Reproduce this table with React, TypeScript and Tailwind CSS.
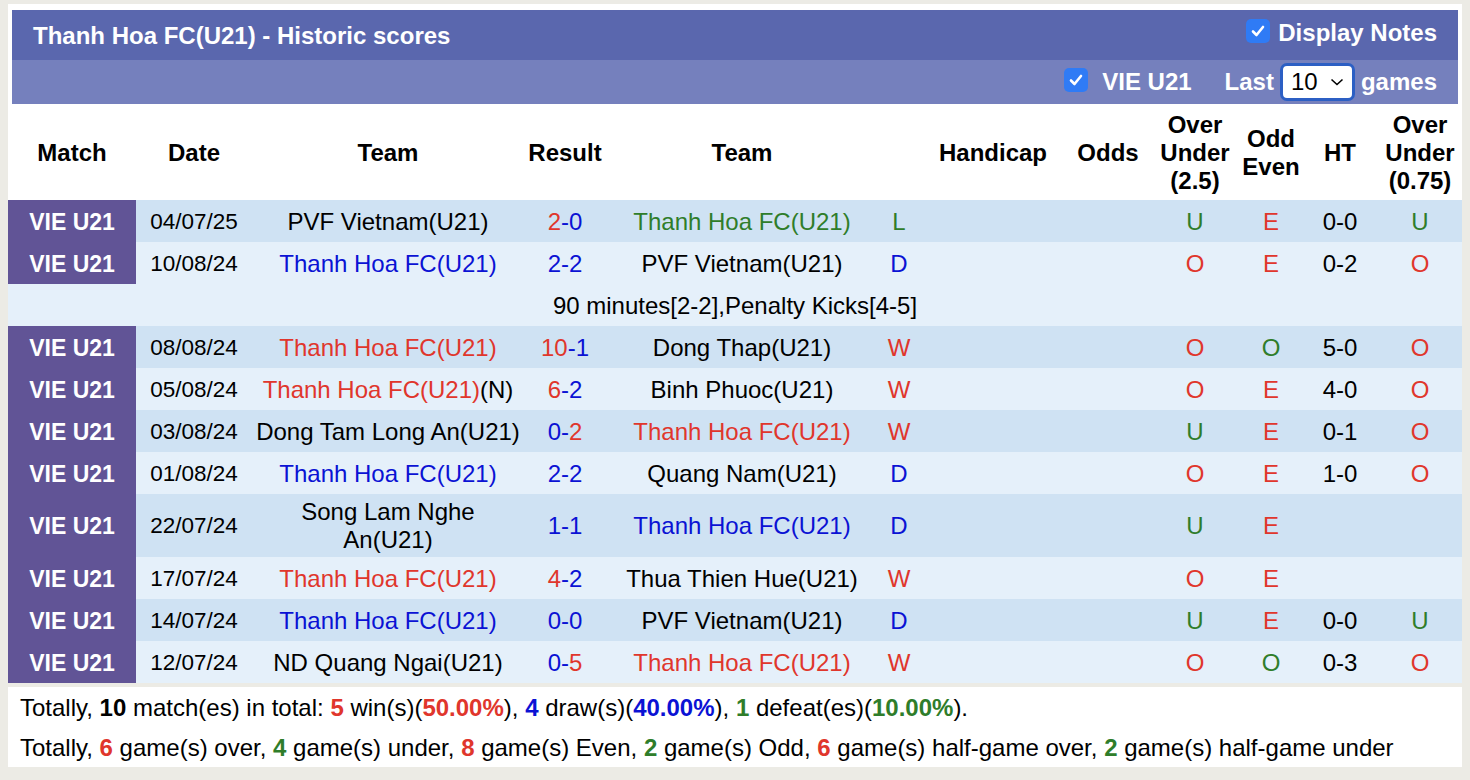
import React from "react";

const RED = "text-[#e0362c]";
const BLUE = "text-[#0b12d4]";
const GREEN = "text-[#2f7d2a]";

type Seg = { t: string; c?: string };
type Row = {
  date: string;
  home: Seg[];
  score: Seg[];
  away: Seg[];
  wl: Seg;
  ou: Seg;
  oe: Seg;
  ht: string;
  ou2: Seg | null;
  note?: string;
  tall?: boolean;
};

const U: Seg = { t: "U", c: GREEN };
const O: Seg = { t: "O", c: RED };
const E: Seg = { t: "E", c: RED };
const OG: Seg = { t: "O", c: GREEN };
const W: Seg = { t: "W", c: RED };
const D: Seg = { t: "D", c: BLUE };
const L: Seg = { t: "L", c: GREEN };

const rows: Row[] = [
  {
    date: "04/07/25",
    home: [{ t: "PVF Vietnam(U21)" }],
    score: [{ t: "2", c: RED }, { t: "-0", c: BLUE }],
    away: [{ t: "Thanh Hoa FC(U21)", c: GREEN }],
    wl: L, ou: U, oe: E, ht: "0-0", ou2: U,
  },
  {
    date: "10/08/24",
    home: [{ t: "Thanh Hoa FC(U21)", c: BLUE }],
    score: [{ t: "2-2", c: BLUE }],
    away: [{ t: "PVF Vietnam(U21)" }],
    wl: D, ou: O, oe: E, ht: "0-2", ou2: O,
    note: "90 minutes[2-2],Penalty Kicks[4-5]",
  },
  {
    date: "08/08/24",
    home: [{ t: "Thanh Hoa FC(U21)", c: RED }],
    score: [{ t: "10", c: RED }, { t: "-1", c: BLUE }],
    away: [{ t: "Dong Thap(U21)" }],
    wl: W, ou: O, oe: OG, ht: "5-0", ou2: O,
  },
  {
    date: "05/08/24",
    home: [{ t: "Thanh Hoa FC(U21)", c: RED }, { t: "(N)" }],
    score: [{ t: "6", c: RED }, { t: "-2", c: BLUE }],
    away: [{ t: "Binh Phuoc(U21)" }],
    wl: W, ou: O, oe: E, ht: "4-0", ou2: O,
  },
  {
    date: "03/08/24",
    home: [{ t: "Dong Tam Long An(U21)" }],
    score: [{ t: "0-", c: BLUE }, { t: "2", c: RED }],
    away: [{ t: "Thanh Hoa FC(U21)", c: RED }],
    wl: W, ou: U, oe: E, ht: "0-1", ou2: O,
  },
  {
    date: "01/08/24",
    home: [{ t: "Thanh Hoa FC(U21)", c: BLUE }],
    score: [{ t: "2-2", c: BLUE }],
    away: [{ t: "Quang Nam(U21)" }],
    wl: D, ou: O, oe: E, ht: "1-0", ou2: O,
  },
  {
    date: "22/07/24",
    home: [{ t: "Song Lam Nghe An(U21)" }],
    score: [{ t: "1-1", c: BLUE }],
    away: [{ t: "Thanh Hoa FC(U21)", c: BLUE }],
    wl: D, ou: U, oe: E, ht: "", ou2: null, tall: true,
  },
  {
    date: "17/07/24",
    home: [{ t: "Thanh Hoa FC(U21)", c: RED }],
    score: [{ t: "4", c: RED }, { t: "-2", c: BLUE }],
    away: [{ t: "Thua Thien Hue(U21)" }],
    wl: W, ou: O, oe: E, ht: "", ou2: null,
  },
  {
    date: "14/07/24",
    home: [{ t: "Thanh Hoa FC(U21)", c: BLUE }],
    score: [{ t: "0-0", c: BLUE }],
    away: [{ t: "PVF Vietnam(U21)" }],
    wl: D, ou: U, oe: E, ht: "0-0", ou2: U,
  },
  {
    date: "12/07/24",
    home: [{ t: "ND Quang Ngai(U21)" }],
    score: [{ t: "0-", c: BLUE }, { t: "5", c: RED }],
    away: [{ t: "Thanh Hoa FC(U21)", c: RED }],
    wl: W, ou: O, oe: OG, ht: "0-3", ou2: O,
  },
];

function Segs({ s }: { s: Seg[] }) {
  return (
    <>
      {s.map((x, i) => (
        <span key={i} className={x.c ?? "text-black"}>
          {x.t}
        </span>
      ))}
    </>
  );
}

function CheckBox() {
  return (
    <span className="inline-flex h-[24px] w-[24px] items-center justify-center rounded-[5px] bg-[#2f7bf5]">
      <svg width="16" height="16" viewBox="0 0 16 16">
        <path d="M3 8.5 L6.5 12 L13 4" fill="none" stroke="white" strokeWidth="2.6" strokeLinecap="round" strokeLinejoin="round" />
      </svg>
    </span>
  );
}

export default function App() {
  const font = { fontFamily: '"Liberation Sans", Arial, Helvetica, sans-serif' };
  return (
    <div className="h-[780px] w-full overflow-hidden bg-[#ecebe5] pt-[4px]" style={font}>
      <div className="ml-[8px] w-[1454px] bg-white pt-[6px]">
        {/* Title bar */}
        <div className="mx-[4px] flex h-[50px] items-center justify-between bg-[#5a67ae] pl-[21px] pr-[21px] text-[24px] font-bold text-white">
          <span className="pt-[1px]">Thanh Hoa FC(U21) - Historic scores</span>
          <span className="flex items-center gap-[8px] pb-[4px]">
            <span className="-mt-[4px]"><CheckBox /></span>
            <span>Display Notes</span>
          </span>
        </div>
        {/* Sub bar */}
        <div className="mx-[4px] flex h-[44px] items-center justify-end bg-[#7580bd] pr-[21px] text-[24px] font-bold text-white">
          <span className="-mt-[4px]"><CheckBox /></span>
          <span className="ml-[14px]">VIE U21</span>
          <span className="ml-[33px]">Last</span>
          <span className="ml-[6px] flex h-[38px] w-[75px] items-center justify-between rounded-[7px] border-[3px] border-[#2c5fc4] bg-white pl-[8px] pr-[8px] text-[24px] font-normal text-black">
            <span>10</span>
            <svg width="14" height="10" viewBox="0 0 14 10">
              <path d="M1.5 2.5 L7 7.5 L12.5 2.5" fill="none" stroke="black" strokeWidth="1.6" />
            </svg>
          </span>
          <span className="ml-[6px]">games</span>
        </div>

        {/* Table */}
        <table className="mt-[1px] w-[1454px] table-fixed border-collapse text-[24px] leading-[28px]">
          <colgroup>
            <col className="w-[128px]" />
            <col className="w-[116px]" />
            <col className="w-[272px]" />
            <col className="w-[82px]" />
            <col className="w-[272px]" />
            <col className="w-[42px]" />
            <col className="w-[146px]" />
            <col className="w-[84px]" />
            <col className="w-[90px]" />
            <col className="w-[62px]" />
            <col className="w-[76px]" />
            <col className="w-[84px]" />
          </colgroup>
          <thead>
            <tr className="h-[95px] text-center font-bold text-black">
              <th className="font-bold">Match</th>
              <th className="font-bold">Date</th>
              <th className="font-bold">Team</th>
              <th className="font-bold">Result</th>
              <th className="font-bold">Team</th>
              <th></th>
              <th className="font-bold">Handicap</th>
              <th className="font-bold">Odds</th>
              <th className="font-bold">Over<br />Under<br />(2.5)</th>
              <th className="font-bold">Odd<br />Even</th>
              <th className="font-bold">HT</th>
              <th className="font-bold">Over<br />Under<br />(0.75)</th>
            </tr>
          </thead>
          <tbody>
            {rows.map((r, i) => {
              const bg = i % 2 === 0 ? "bg-[#cfe2f3]" : "bg-[#e5f0fa]";
              return (
                <React.Fragment key={i}>
                  <tr className={`${bg} ${r.tall ? "h-[63px]" : "h-[42px]"} text-center text-black`}>
                    <td className="bg-[#615496] pt-[1px] text-[23px] font-bold text-white">VIE U21</td>
                    <td className="pt-[1px] text-[22.5px]">{r.date}</td>
                    <td className="px-[4px] pt-[1px]"><Segs s={r.home} /></td>
                    <td className="pt-[1px]"><Segs s={r.score} /></td>
                    <td className="px-[4px] pt-[1px]"><Segs s={r.away} /></td>
                    <td className="pt-[1px]"><Segs s={[r.wl]} /></td>
                    <td></td>
                    <td></td>
                    <td className="pt-[1px]"><Segs s={[r.ou]} /></td>
                    <td className="pt-[1px]"><Segs s={[r.oe]} /></td>
                    <td className="pt-[1px]">{r.ht}</td>
                    <td className="pt-[1px]">{r.ou2 ? <Segs s={[r.ou2]} /> : null}</td>
                  </tr>
                  {r.note ? (
                    <tr className="h-[42px] bg-[#e5f0fa] text-center text-black">
                      <td colSpan={12} className="pt-[1px]">{r.note}</td>
                    </tr>
                  ) : null}
                </React.Fragment>
              );
            })}
          </tbody>
        </table>
      </div>
      {/* Footer */}
      <div className="ml-[8px] mt-[4px] flex h-[80px] w-[1454px] flex-col justify-center gap-[12px] bg-white pl-[12px] pt-[2px] text-[24px] leading-[28px] text-black">
        <div>
          Totally, <b>10</b> match(es) in total: <b className={RED}>5</b> win(s)(<b className={RED}>50.00%</b>), <b className={BLUE}>4</b> draw(s)(<b className={BLUE}>40.00%</b>), <b className={GREEN}>1</b> defeat(es)(<b className={GREEN}>10.00%</b>).
        </div>
        <div>
          Totally, <b className={RED}>6</b> game(s) over, <b className={GREEN}>4</b> game(s) under, <b className={RED}>8</b> game(s) Even, <b className={GREEN}>2</b> game(s) Odd, <b className={RED}>6</b> game(s) half-game over, <b className={GREEN}>2</b> game(s) half-game under
        </div>
      </div>
    </div>
  );
}
